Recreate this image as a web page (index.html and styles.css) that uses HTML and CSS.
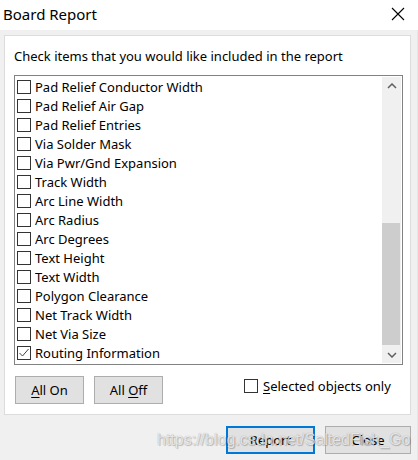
FILE: index.html
```html
<!DOCTYPE html>
<html>
<head>
<meta charset="utf-8">
<link rel="stylesheet" href="styles.css">
</head>
<body>
<div class="window">
  <div class="titlebar">
    <span class="title">Board Report</span>
    <svg class="close" width="14" height="14" viewBox="0 0 14 14"><path d="M1 1 L13 13 M13 1 L1 13" stroke="#000" stroke-width="1.1" fill="none"/></svg>
  </div>
  <div class="client">
    <div class="panel">
      <div class="prompt">Check items that you would like included in the report</div>
      <div class="listbox">
        <div class="rows">
          <div class="row"><span class="cb"></span><span>Pad Relief Conductor Width</span></div>
          <div class="row"><span class="cb"></span><span>Pad Relief Air Gap</span></div>
          <div class="row"><span class="cb"></span><span>Pad Relief Entries</span></div>
          <div class="row"><span class="cb"></span><span>Via Solder Mask</span></div>
          <div class="row"><span class="cb"></span><span>Via Pwr/Gnd Expansion</span></div>
          <div class="row"><span class="cb"></span><span>Track Width</span></div>
          <div class="row"><span class="cb"></span><span>Arc Line Width</span></div>
          <div class="row"><span class="cb"></span><span>Arc Radius</span></div>
          <div class="row"><span class="cb"></span><span>Arc Degrees</span></div>
          <div class="row"><span class="cb"></span><span>Text Height</span></div>
          <div class="row"><span class="cb"></span><span>Text Width</span></div>
          <div class="row"><span class="cb"></span><span>Polygon Clearance</span></div>
          <div class="row"><span class="cb"></span><span>Net Track Width</span></div>
          <div class="row"><span class="cb"></span><span>Net Via Size</span></div>
          <div class="row"><span class="cb checked"><svg width="12" height="12" viewBox="0 0 12 12"><path d="M1.5 6 L4.5 9 L10.5 2" stroke="#444" stroke-width="1" fill="none"/></svg></span><span>Routing Information</span></div>
        </div>
        <div class="scrollbar">
          <div class="arrow"><svg width="10" height="6" viewBox="0 0 10 6"><path d="M1 5 L5 1 L9 5" stroke="#606060" stroke-width="1.5" fill="none"/></svg></div>
          <div class="track"><div class="thumb"></div></div>
          <div class="arrow"><svg width="10" height="6" viewBox="0 0 10 6"><path d="M1 1 L5 5 L9 1" stroke="#606060" stroke-width="1.5" fill="none"/></svg></div>
        </div>
      </div>
      <div class="controls">
        <button class="btn small"><u>A</u>ll On</button>
        <button class="btn small">All <u>O</u>ff</button>
        <label class="sel"><span class="cb"></span><span><u>S</u>elected objects only</span></label>
      </div>
    </div>
    <div class="footer">
      <button class="btn big default">Report</button>
      <button class="btn big">Close</button>
    </div>
  </div>
  <div class="watermark">https://blog.csdn.net/SaltedFish_Go</div>
</div>
</body>
</html>
```
FILE: styles.css
```css
html, body {
  margin: 0;
  padding: 0;
}
body {
  width: 418px;
  height: 460px;
  overflow: hidden;
  font-family: "Noto Sans", "Open Sans", sans-serif;
  color: #000;
}
.window {
  position: relative;
  width: 418px;
  height: 460px;
  background: #f0f0f0;
}
.titlebar {
  height: 30px;
  background: #fff;
  display: flex;
  align-items: center;
  justify-content: space-between;
  padding: 0 13px 0 3px;
  box-sizing: border-box;
}
.title {
  font-size: 15px;
  position: relative;
  top: -1px;
}
.close {
  display: block;
  position: relative;
  top: -1px;
}
.client {
  padding: 5px 6px 0 4px;
  border-right: 1px solid #e6e6e6;
  height: 430px;
  box-sizing: border-box;
}
.panel {
  background: #fff;
  border: 1px solid #dcdcdc;
  height: 380px;
  box-sizing: border-box;
  padding: 11px 7px 0 9px;
}
.prompt {
  font-size: 13px;
  height: 28px;
  line-height: 19px;
}
.listbox {
  display: flex;
  height: 290px;
  border: 1px solid #828282;
  box-sizing: border-box;
  overflow: hidden;
}
.rows {
  flex: 1;
  padding: 1px 0 0 2px;
}
.row {
  height: 19px;
  display: flex;
  align-items: center;
  font-size: 13px;
  gap: 5px;
}
.cb {
  width: 14px;
  height: 14px;
  border: 1px solid #333;
  box-sizing: border-box;
  background: #fff;
  flex: none;
  display: flex;
  align-items: center;
  justify-content: center;
}
.row .cb {
  margin-right: -1px;
}
.cb svg {
  display: block;
}
.scrollbar {
  width: 19px;
  background: #f0f0f0;
  display: flex;
  flex-direction: column;
  margin: 1px 1px 1px 0;
}
.arrow {
  height: 17px;
  display: flex;
  align-items: center;
  justify-content: center;
}
.track {
  flex: 1;
  display: flex;
  flex-direction: column;
  justify-content: flex-end;
  padding-bottom: 1px;
}
.thumb {
  height: 122px;
  background: #cdcdcd;
  margin: 0 1px 0 0;
}
.controls {
  display: flex;
  align-items: flex-start;
  margin-top: 11px;
  padding-left: 1px;
}
.btn {
  font-family: inherit;
  font-size: 13px;
  background: #e1e1e1;
  border: 1px solid #adadad;
  color: #000;
  padding: 0;
  box-sizing: border-box;
}
.btn u {
  text-decoration-thickness: 1px;
  text-underline-offset: 2px;
}
.small {
  width: 69px;
  height: 28px;
  margin-right: 10px;
}
.sel {
  display: flex;
  align-items: center;
  gap: 5px;
  font-size: 13px;
  margin-left: 71px;
  margin-top: 1px;
}
.sel u {
  text-underline-offset: 2px;
}
.footer {
  display: flex;
  justify-content: flex-end;
  gap: 10px;
  margin-top: 11px;
  padding-right: 0;
}
.big {
  width: 89px;
  height: 28px;
}
.default {
  border: 2px solid #0078d7;
}
.footer .big:last-child {
  width: 86px;
}
.watermark {
  position: absolute;
  left: 157px;
  top: 431px;
  font-family: "Liberation Sans", Arial, sans-serif;
  font-size: 16px;
  color: rgba(255, 255, 255, 0.75);
  text-shadow: 0 0 1px rgba(0, 0, 0, 0.35), 1px 1px 1px rgba(0, 0, 0, 0.2);
  white-space: nowrap;
  pointer-events: none;
}
```
